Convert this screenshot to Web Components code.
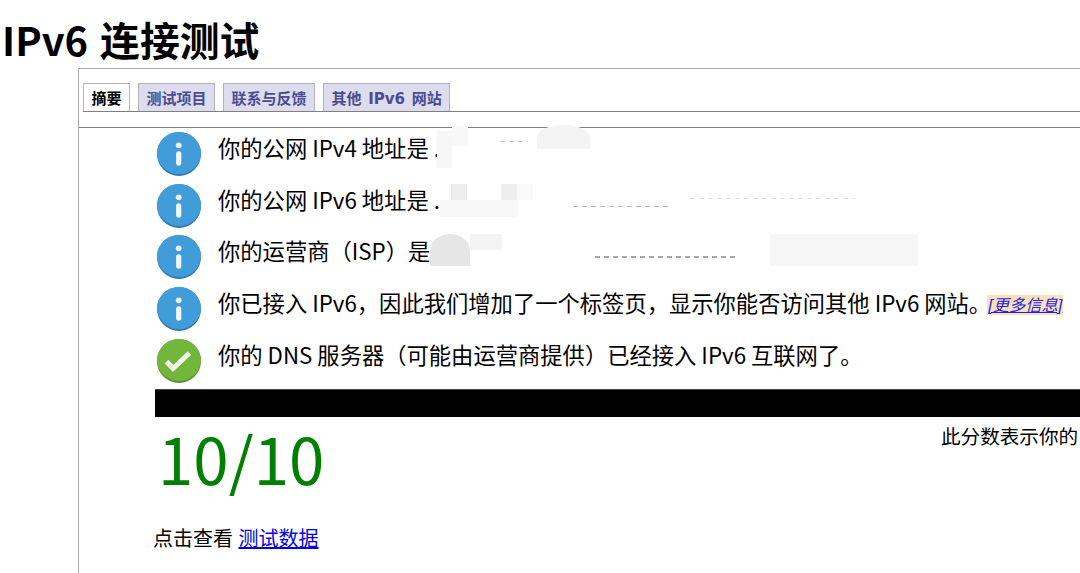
<!DOCTYPE html>
<html lang="zh-CN">
<head>
<meta charset="utf-8">
<title>IPv6 连接测试</title>
<style>
  html, body { margin: 0; height: 100%; overflow: hidden; background: #fff; }
  body { font-family: "Noto Sans CJK SC", sans-serif; color: #000; }
</style>
</head>
<body>
<test-page>
  <test-tabs>
    <tab-item active>摘要</tab-item>
    <tab-item>测试项目</tab-item>
    <tab-item>联系与反馈</tab-item>
    <tab-item>其他 IPv6 网站</tab-item>
  </test-tabs>
  <result-row kind="info">你的公网 IPv4 地址是 .
    <blur-patch slot="patch" x="282" y="-1" w="15" h="37" c="#f7f7f7"></blur-patch>
    <blur-patch slot="patch" x="297" y="-6" w="16" h="20" c="#f8f8f8"></blur-patch>
    <blur-patch slot="patch" x="382" y="-7" w="53" h="24" c="#f3f4f3" round></blur-patch>
    <blur-patch slot="patch" x="345" y="9" w="28" h="1" c="#cfcfcf" dash></blur-patch>
  </result-row>
  <result-row kind="info">你的公网 IPv6 地址是 .
    <blur-patch slot="patch" x="296" y="0" w="16" h="16" c="#eceded"></blur-patch>
    <blur-patch slot="patch" x="346" y="0" w="16" h="16" c="#eeeeee"></blur-patch>
    <blur-patch slot="patch" x="285" y="16" w="78" h="17" c="#f8f8f8"></blur-patch>
    <blur-patch slot="patch" x="362" y="0" w="16" h="16" c="#f9f9f9"></blur-patch>
    <blur-patch slot="patch" x="418" y="22" w="98" h="1" c="#b5b5b5" dash></blur-patch>
    <blur-patch slot="patch" x="535" y="14" w="165" h="1" c="#e2e2e2" dash></blur-patch>
  </result-row>
  <result-row kind="info">你的运营商（ISP）是
    <blur-patch slot="patch" x="275" y="-1" w="40" h="32" c="#e6e6e6" round></blur-patch>
    <blur-patch slot="patch" x="315" y="-1" w="32" h="16" c="#f5f4f3"></blur-patch>
    <blur-patch slot="patch" x="440" y="21" w="140" h="2" c="#a8a8a8" dash></blur-patch>
    <blur-patch slot="patch" x="615" y="-1" w="148" h="32" c="#f6f6f6"></blur-patch>
  </result-row>
  <result-row kind="info">你已接入 IPv6，因此我们增加了一个标签页，显示你能否访问其他 IPv6 网站。<more-info></more-info></result-row>
  <result-row kind="ok">你的 DNS 服务器（可能由运营商提供）已经接入 IPv6 互联网了。</result-row>
  <score-panel score="10/10">
    <span slot="note">此分数表示你的</span>
    点击查看 <a href="#">测试数据</a>
  </score-panel>
</test-page>

<script>
const CJK = '"Noto Sans CJK SC", sans-serif';

class TestPage extends HTMLElement {
  constructor() {
    super();
    this.attachShadow({ mode: "open" }).innerHTML = /* html */`
    <style>
      :host { display: block; width: 1300px; }
      h1 {
        margin: 0;
        height: 68px;
        padding: 19px 0 0 2px;
        box-sizing: border-box;
        font: 700 39.8px/1 ${CJK};
        word-spacing: 3px;
      }
      .panel {
        margin-left: 78px;
        height: 505px;
        border-left: 1px solid #aaa;
        border-top: 1px solid #aaa;
      }
      .content { padding-left: 76px; padding-top: 4px; }
    </style>
    <h1>IPv6 连接测试</h1>
    <div class="panel">
      <slot name="tabs"></slot>
      <div class="content"><slot></slot></div>
    </div>`;
  }
}

class TestTabs extends HTMLElement {
  constructor() {
    super();
    this.attachShadow({ mode: "open" }).innerHTML = /* html */`
    <style>
      :host {
        display: block;
        height: 59px;
        box-sizing: border-box;
        padding: 14px 0 0 4px;
        border-bottom: 1px solid #808080;
      }
      .row {
        display: flex;
        gap: 8px;
        height: 29px;
        border-bottom: 1px solid #808080;
        box-sizing: border-box;
      }
    </style>
    <div class="row"><slot></slot></div>`;
  }
  connectedCallback() {
    this.slot = "tabs";
  }
}

class TabItem extends HTMLElement {
  constructor() {
    super();
    this.attachShadow({ mode: "open" }).innerHTML = /* html */`
    <style>
      :host {
        display: block;
        height: 28px;
        box-sizing: border-box;
        padding: 6px 7.5px 0;
        border: 1px solid #b0b0c0;
        border-bottom: 0;
        background: #dcdcec;
        color: #4b4b93;
        font: 700 15px/18px "DejaVu Sans", ${CJK};
        word-spacing: 1.5px;
        white-space: nowrap;
      }
      :host([active]) {
        background: #fff;
        color: #000;
        border-color: #b5b5b5;
        height: 28px;
      }
    </style>
    <slot></slot>`;
  }
}

class StatusIcon extends HTMLElement {
  constructor() {
    super();
    const ok = this.getAttribute("kind") === "ok";
    const base = ok ? "#72b63c" : "#419dda";
    const dark = ok ? "#5a8f30" : "#3279ad";
    const mark = ok
      ? `<path d="M9.5 22.5 L16 29.5 L32.5 14" fill="none" stroke="#f0f6ea" stroke-width="5"/>`
      : `<circle cx="21.7" cy="13.3" r="2.9" fill="#eaf3fa"/><rect x="19.1" y="19.3" width="5.2" height="14.4" rx="2.6" fill="#f2f7fb"/>`;
    this.attachShadow({ mode: "open" }).innerHTML = /* html */`
    <style>
      :host { display: block; flex: none; width: 44px; height: 44px; }
      svg { display: block; }
    </style>
    <svg width="44" height="44" viewBox="0 0 44 44">
      <circle cx="22" cy="22" r="22" fill="${dark}"/>
      <ellipse cx="22" cy="21" rx="22" ry="21" fill="${base}"/>
      ${mark}
    </svg>`;
  }
}

class ResultRow extends HTMLElement {
  constructor() {
    super();
    const kind = this.getAttribute("kind");
    this.attachShadow({ mode: "open" }).innerHTML = /* html */`
    <style>
      :host {
        display: flex;
        position: relative;
        height: 51.7px;
        gap: 17px;
        padding-left: 2px;
        font: 400 22.3px/30px ${CJK};
        white-space: nowrap;
      }
    </style>
    <status-icon kind="${kind}"></status-icon>
    <div><slot></slot></div>
    <slot name="patch"></slot>`;
  }
}

class BlurPatch extends HTMLElement {
  constructor() {
    super();
    const [x, y, w, h] = ["x", "y", "w", "h"].map(a => this.getAttribute(a));
    const c = this.getAttribute("c");
    const radius = this.hasAttribute("round") ? "50% 50% 0 0" : "0";
    const fill = this.hasAttribute("dash")
      ? `repeating-linear-gradient(90deg, ${c} 0 5px, transparent 5px 9px)`
      : c;
    this.attachShadow({ mode: "open" }).innerHTML = /* html */`
    <style>
      :host {
        display: block;
        position: absolute;
        left: ${x}px;
        top: ${y}px;
        width: ${w}px;
        height: ${h}px;
        border-radius: ${radius};
        background: ${fill};
        filter: blur(.5px);
      }
    </style>`;
  }
}

class MoreInfo extends HTMLElement {
  constructor() {
    super();
    this.attachShadow({ mode: "open" }).innerHTML = /* html */`
    <style>
      :host {
        display: inline-block;
        margin-left: -4px;
        padding: 0 1px;
        background: #fde0b4;
        font: italic 400 16.3px/20px "Liberation Sans", ${CJK};
        vertical-align: 1px;
      }
      a { color: #2222ee; }
    </style>
    <a href="#">[更多信息]</a>`;
  }
}

class ScorePanel extends HTMLElement {
  constructor() {
    super();
    this.attachShadow({ mode: "open" }).innerHTML = /* html */`
    <style>
      :host { display: block; margin-top: -1px; }
      .bar { height: 28px; background: #000; border-top: 1px solid #444; box-sizing: border-box; }
      .top { display: flex; height: 107px; }
      .score {
        width: 786px;
        padding: 0 0 0 3px;
        box-sizing: border-box;
        color: #008000;
        font: 400 63.7px/80px ${CJK};
      }
      .note {
        white-space: nowrap;
        font: 400 19.6px/28px ${CJK};
        padding-top: 5px;
      }
      .link { margin-left: -2px; font: 400 20px/28px ${CJK}; word-spacing: 1px; }
      ::slotted(a) { color: #0000ee; }
    </style>
    <div class="bar"></div>
    <div class="top">
      <div class="score">${this.getAttribute("score")}</div>
      <div class="note"><slot name="note"></slot></div>
    </div>
    <div class="link"><slot></slot></div>`;
  }
}

customElements.define("test-page", TestPage);
customElements.define("test-tabs", TestTabs);
customElements.define("tab-item", TabItem);
customElements.define("status-icon", StatusIcon);
customElements.define("result-row", ResultRow);
customElements.define("blur-patch", BlurPatch);
customElements.define("more-info", MoreInfo);
customElements.define("score-panel", ScorePanel);
</script>
</body>
</html>
